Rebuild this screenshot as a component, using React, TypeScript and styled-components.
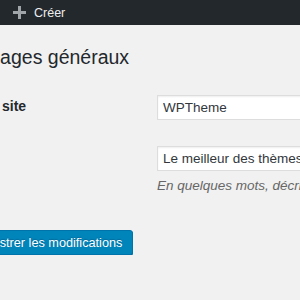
import { createGlobalStyle, styled } from "styled-components";

const GlobalStyle = createGlobalStyle`
    html, body {
        margin: 0;
        padding: 0;
        background-color: #f1f1f1;
        overflow: hidden;
    }
    body {
        font-family: "Liberation Sans", Arial, sans-serif;
        color: #444;
    }
`;

const AdminBar = styled.div`
    display: flex;
    align-items: center;
    height: 25px;
    padding-left: 13px;
    background-color: #23282d;
`;

const NewItem = styled.div`
    display: flex;
    align-items: center;
    gap: 8px;
    font-size: 12.5px;
    color: #eee;
    svg {
        display: block;
    }
`;

const Wrap = styled.div`
    margin-left: -53px;
    width: 420px;
`;

const Title = styled.h1`
    margin: 20px 0 0 13px;
    font-size: 19.5px;
    line-height: 25px;
    font-weight: 400;
    color: #23282d;
`;

const FormTable = styled.div`
    margin-top: 12px;
`;

const Row = styled.div`
    display: grid;
    grid-template-columns: 210px 1fr;
    padding: 13px 0;
`;

const Label = styled.label`
    font-size: 14px;
    line-height: 23px;
    font-weight: 600;
    color: #23282d;
`;

const Input = styled.input`
    box-sizing: border-box;
    width: 200px;
    height: 25px;
    margin: 0;
    padding: 0 5px;
    border: 1px solid #ddd;
    box-shadow: inset 0 1px 2px rgba(0, 0, 0, 0.07);
    background-color: #fff;
    font-family: "Liberation Sans", Arial, sans-serif;
    font-size: 13.5px;
    color: #32373c;
    outline: none;
`;

const Description = styled.p`
    margin: 6px 0 0;
    font-size: 13.5px;
    line-height: 18px;
    font-style: italic;
    color: #666;
    white-space: nowrap;
`;

const Submit = styled.div`
    padding: 22px 0 0 5px;
`;

const Button = styled.button`
    height: 25px;
    padding: 0 10px;
    border: 1px solid #0073aa;
    border-radius: 3px;
    background-color: #0085ba;
    box-shadow: 0 1px 0 #006799;
    color: #fff;
    font-family: "Liberation Sans", Arial, sans-serif;
    font-size: 12.7px;
    text-shadow: 0 -1px 1px #006799;
`;

const PlusIcon = () => (
    <svg width="13" height="13" viewBox="0 0 13 13">
        <rect x="5" y="0" width="3" height="13" fill="#a0a5aa" />
        <rect x="0" y="5" width="13" height="3" fill="#a0a5aa" />
    </svg>
);

const App = () => {
    return <>
        <GlobalStyle />
        <AdminBar>
            <NewItem><PlusIcon />Créer</NewItem>
        </AdminBar>
        <Wrap>
            <Title>Réglages généraux</Title>
            <FormTable>
                <Row>
                    <Label htmlFor="blogname">Titre du site</Label>
                    <Input id="blogname" defaultValue="WPTheme" />
                </Row>
                <Row>
                    <Label htmlFor="blogdescription">Slogan</Label>
                    <div>
                        <Input id="blogdescription" defaultValue="Le meilleur des thèmes" />
                        <Description>En quelques mots, décrivez la raison d’être de ce site.</Description>
                    </div>
                </Row>
            </FormTable>
            <Submit>
                <Button>Enregistrer les modifications</Button>
            </Submit>
        </Wrap>
    </>
}

export default App;
